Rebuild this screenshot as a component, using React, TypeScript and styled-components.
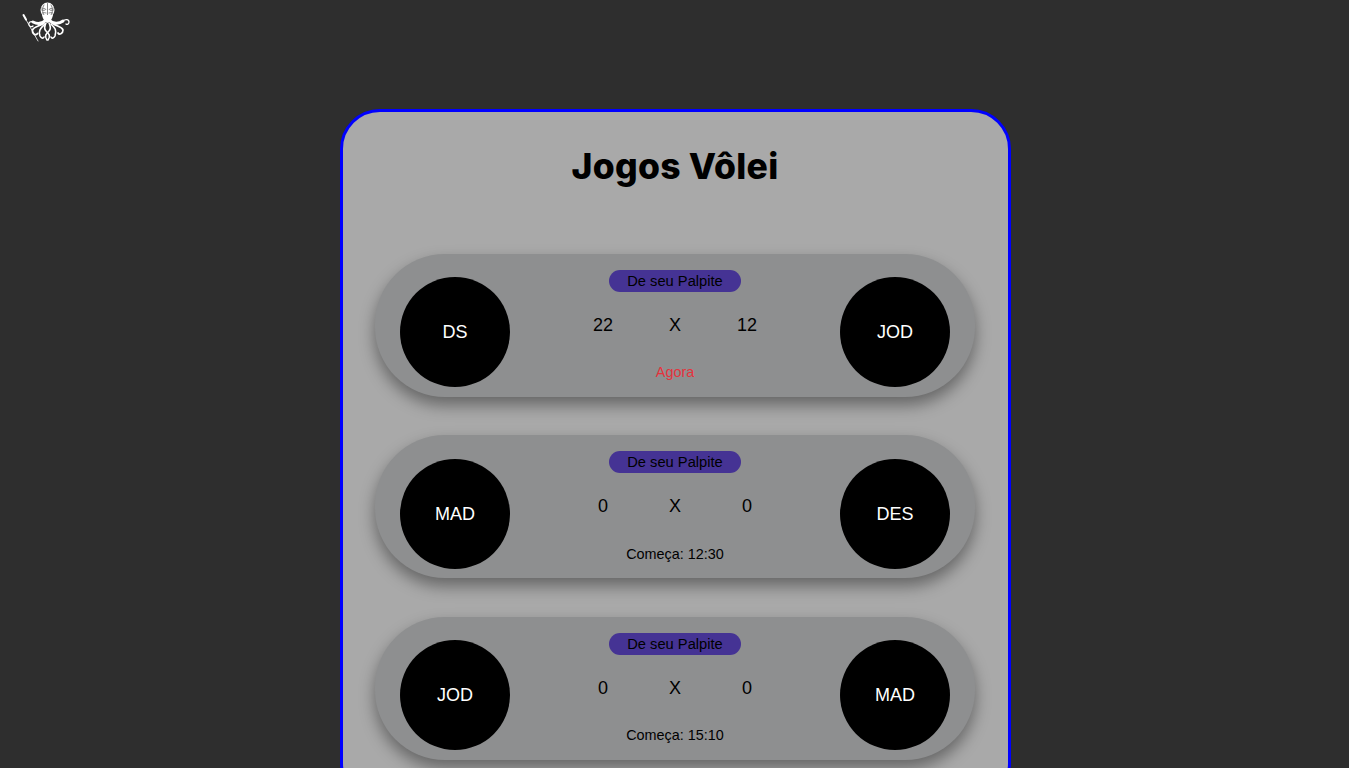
import React from "react";
import styled, { createGlobalStyle } from "styled-components";

const Global = createGlobalStyle`
  html, body { margin: 0; padding: 0; background: #2e2e2e; overflow: hidden; }
  body { font-family: "Liberation Sans", Arial, sans-serif; color: #000; }
`;

const Page = styled.div`
  box-sizing: border-box;
  height: 768px;
  padding-left: 2px;
  overflow: hidden;
  background: #2e2e2e;
`;

const Header = styled.header`
  display: flex;
  align-items: flex-start;
  height: 109px;
  padding-left: 20px;
  box-sizing: border-box;
`;

const Card = styled.main`
  box-sizing: border-box;
  width: 671px;
  margin: 0 auto;
  padding: 31px 33px 40px 32px;
  background: #a9a9a9;
  border: 3px solid #0000ff;
  border-radius: 40px;
`;

const Title = styled.h1`
  margin: 0 0 62.600px;
  height: 48px;
  line-height: 48px;
  font-family: Inter, "Open Sans", sans-serif;
  font-size: 35.500px;
  font-weight: 800;
  letter-spacing: 0.25px;
  text-align: center;
  color: #000;
`;

const Games = styled.div`
  display: flex;
  flex-direction: column;
  gap: 38.600px;
`;

const Row = styled.article`
  box-sizing: border-box;
  display: flex;
  justify-content: space-between;
  width: 600px;
  height: 143px;
  padding: 23.400px 25px 9.600px;
  background: #8e8f90;
  border-radius: 70px;
  box-shadow: 0 8px 16px rgba(0, 0, 0, 0.4);
`;

const Team = styled.div`
  box-sizing: border-box;
  display: flex;
  align-items: center;
  justify-content: center;
  width: 110px;
  height: 110px;
  padding-top: 1px;
  border-radius: 50%;
  background: #000;
  color: #fff;
  font-size: 18px;
`;

const Center = styled.div`
  display: flex;
  flex-direction: column;
  align-items: center;
  width: 190px;
  margin-top: -7.400px;
`;

const Pill = styled.div`
  width: 132px;
  height: 22px;
  line-height: 22px;
  border-radius: 11px;
  background: #453394;
  font-size: 14.700px;
  text-align: center;
`;

const Score = styled.div`
  display: grid;
  grid-template-columns: repeat(3, 72px);
  justify-items: center;
  margin-top: 23px;
  height: 20px;
  line-height: 20px;
  font-size: 18px;
`;

const Status = styled.div<{ $live?: boolean }>`
  margin-top: 29.600px;
  height: 16px;
  line-height: 16px;
  font-size: 14.400px;
  color: ${(p) => (p.$live ? "#e5323c" : "#000")};
`;

const Logo = () => (
  <svg width="52" height="44" viewBox="0 0 52 44" fill="none" stroke="#fff" strokeLinecap="round">
    <ellipse cx="25.500" cy="10" rx="7" ry="7.500" fill="#fff" stroke="none" />
    <path
      d="M25.500 3.500v13M22 5c-2 3-2 7 0 10M29 5c2 3 2 7 0 10M19.500 8c2 1 3 0 4 1s-2 2-4 1M31.500 8c-2 1-3 0-4 1s2 2 4 1M20 13c2-1 3 0 4 0M31 13c-2-1-3 0-4 0"
      stroke="#777"
      strokeWidth="0.900"
    />
    <path d="M20 15C21 19 22 21 25.500 23C29 21 30 19 31 15z" fill="#fff" stroke="none" />
    <path d="M24 20C20 24 15 24 11 22" strokeWidth="3" />
    <path d="M27 20C31 24 37 24 41 21" strokeWidth="3" />
    <path d="M41 21C43 19 47 19 47 22C47 24 45 25 44 24" strokeWidth="1.300" />
    <path d="M11 22C9 21 6 22 7 25C8 27 10 27 11 26" strokeWidth="1.300" />
    <path d="M22 23C17 27 12 26 10.500 30C10 34 14 36 15.500 33.500" strokeWidth="1.700" />
    <path d="M30 23C35 27 40 26 41 30C41 34 37 35 36 33" strokeWidth="1.700" />
    <path d="M23 24C19 28 16 30 18 36C19 38 21 39 22 37" strokeWidth="1.600" />
    <path d="M29 24C33 28 35 30 33 36C32 38 30 39 29 37" strokeWidth="1.600" />
    <path d="M24 23C22 27 22 29 24 31C27 34 29 36 26 40" strokeWidth="1.600" />
    <path d="M27 23C29 27 29 29 27 31C24 34 22 36 25 40" strokeWidth="1.600" />
    <path d="M2.500 17L16 41" strokeWidth="0.800" />
    <path d="M1.500 15L4 19.500" strokeWidth="2" />
  </svg>
);

const games = [
  { a: "DS", b: "JOD", sa: 22, sb: 12, status: "Agora", live: true },
  { a: "MAD", b: "DES", sa: 0, sb: 0, status: "Começa: 12:30" },
  { a: "JOD", b: "MAD", sa: 0, sb: 0, status: "Começa: 15:10" },
];

export default function App() {
  return (
    <Page>
      <Global />
      <Header>
        <Logo />
      </Header>
      <Card>
        <Title>Jogos Vôlei</Title>
        <Games>
          {games.map((g) => (
            <Row key={g.a + g.b}>
              <Team>{g.a}</Team>
              <Center>
                <Pill>De seu Palpite</Pill>
                <Score>
                  <span>{g.sa}</span>
                  <span>X</span>
                  <span>{g.sb}</span>
                </Score>
                <Status $live={g.live}>{g.status}</Status>
              </Center>
              <Team>{g.b}</Team>
            </Row>
          ))}
        </Games>
      </Card>
    </Page>
  );
}
